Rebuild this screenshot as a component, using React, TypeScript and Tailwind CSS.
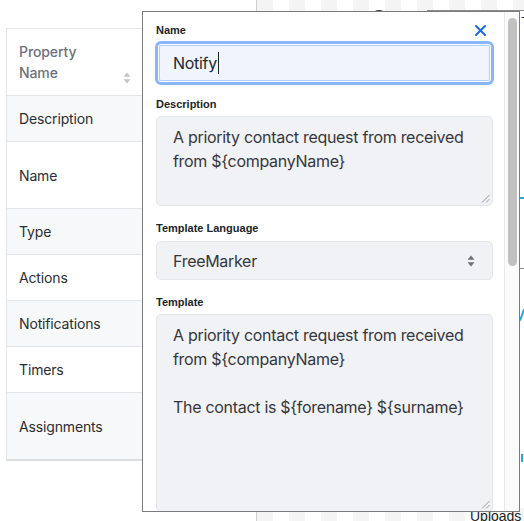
import React from 'react'

const rows = [
  { label: 'Description', h: 'h-[46px]', shade: true },
  { label: 'Name', h: 'h-[67px]', shade: false },
  { label: 'Type', h: 'h-[46px]', shade: true },
  { label: 'Actions', h: 'h-[46px]', shade: false },
  { label: 'Notifications', h: 'h-[46px]', shade: true },
  { label: 'Timers', h: 'h-[46px]', shade: false },
  { label: 'Assignments', h: 'h-[66px]', shade: true },
]

function SortIcon({ color = '#c3c6cc' }: { color?: string }) {
  return (
    <svg width="8" height="12" viewBox="0 0 8 12">
      <path d="M4 0.5 L7.5 4.8 H0.5 Z" fill={color} />
      <path d="M4 11.5 L7.5 7.2 H0.5 Z" fill={color} />
    </svg>
  )
}

function ResizeGrip() {
  return (
    <svg className="absolute right-[2px] bottom-[2px]" width="9" height="9" viewBox="0 0 9 9">
      <path d="M8.5 1 L1 8.5 M8.5 5 L5 8.5" stroke="#9a9a9a" strokeWidth="1" />
    </svg>
  )
}

function FieldLabel({ children }: { children: React.ReactNode }) {
  return (
    <div className="text-[11px] leading-[12px] font-bold text-[#212529] font-['Liberation_Sans',Arial,sans-serif]">
      {children}
    </div>
  )
}

export default function App() {
  return (
    <div className="relative w-[524px] h-[521px] overflow-hidden bg-white font-['Inter',sans-serif]">
      <div className="flex h-full">
        {/* properties table */}
        <div className="w-[256px] shrink-0 pl-[6px] pt-[28px]">
          <div className="w-[244px] border border-[#e3e5e8] border-b-2 border-b-[#dcdde0]">
            <div className="flex h-[67px] border-b border-[#e3e5e8]">
              <div className="w-[136px] flex items-center justify-between pl-[12px] pr-[12px] text-[14px] leading-[21px] font-medium text-[#6c6f7d] tracking-[-0.1px]">
                <div>
                  <div>Property</div>
                  <div>Name</div>
                </div>
                <div className="self-end mb-[11px]">
                  <SortIcon />
                </div>
              </div>
            </div>
            {rows.map((r, i) => (
              <div
                key={r.label}
                className={`flex items-center ${r.h} ${r.shade ? 'bg-[#f7f8f9]' : 'bg-white'} ${i < rows.length - 1 ? 'border-b border-[#e3e5e8]' : ''}`}
              >
                <div className="pl-[12px] text-[14px] text-[#2b2d33] tracking-[-0.15px]">{r.label}</div>
              </div>
            ))}
          </div>
        </div>

        {/* canvas */}
        <div className="relative flex-1 border-l border-[#cfcfcf] bg-[image:repeating-conic-gradient(#ffffff_0_25%,#f4f4f4_0_50%)] bg-[length:32px_32px] bg-[position:0_-4px]">
          <div className="absolute left-[114px] top-[10px] w-[16px] h-[16px] rounded-full bg-[#2a2a2a]" />
          <div className="absolute left-[170px] top-[10px] w-[120px] h-[258px] border-t border-l border-[#8a8a8a] bg-white">
            <div className="pl-[93px] pt-[2px] text-[12px] text-[#333]">T</div>
            <div className="absolute left-[92px] top-[186px] w-[20px] h-[2px] bg-[#2aa7d8]" />
          </div>
          <div className="absolute left-[170px] top-[268px] w-[120px] h-[240px] border-t border-l border-[#8a8a8a] bg-white">
            <div className="absolute left-[93px] top-[40px] w-[2px] h-[12px] bg-[#2aa7d8] rotate-[20deg]" />
            <div className="absolute left-[93px] top-[185px] w-[4px] h-[8px] border-l-2 border-[#2aa7d8]" />
          </div>
          <div className="absolute left-[213px] top-[508px] text-[14px] leading-[16px] text-[#222] font-['Liberation_Sans',Arial,sans-serif]">
            Uploads
          </div>
        </div>
      </div>

      {/* edit popup */}
      <div className="absolute left-[142px] top-[11px] w-[378px] h-[501px] border border-[#7c7c7c] bg-white flex">
        <div className="flex-1 overflow-hidden pl-[13px] pr-[11px] pt-[12px]">
          <div className="flex items-center justify-between">
            <FieldLabel>Name</FieldLabel>
            <svg className="mr-[7px]" width="11" height="11" viewBox="0 0 11 11">
              <path d="M1 1 L10 10 M10 1 L1 10" stroke="#1769f0" strokeWidth="2" strokeLinecap="round" />
            </svg>
          </div>
          <div className="mt-[5px] -ml-[1px] -mr-[1px] h-[44px] rounded-[6px] border-[3px] border-[#8ab6f7] shadow-[inset_0_0_0_1px_#ffffff,inset_0_0_0_2px_#b4cff6] bg-[#eff4fd] flex items-center pl-[15px] text-[16px] text-[#26282c] tracking-[-0.3px]">
            <span>Notify</span>
            <span className="ml-[1px] w-[1px] h-[22px] bg-[#222]" />
          </div>

          <div className="mt-[13px]">
            <FieldLabel>Description</FieldLabel>
          </div>
          <div className="relative mt-[6px] h-[90px] rounded-[5px] border border-[#e5e6ea] bg-[#f1f2f6] px-[16px] pt-[8px] text-[16px] leading-[24px] text-[#35373c] tracking-[-0.3px]">
            <div>A priority contact request from received</div>
            <div>from {'${companyName}'}</div>
            <ResizeGrip />
          </div>

          <div className="mt-[16px]">
            <FieldLabel>Template Language</FieldLabel>
          </div>
          <div className="mt-[7px] h-[39px] rounded-[5px] border border-[#e5e6ea] bg-[#f1f2f6] flex items-center justify-between pl-[16px] pr-[17px] text-[16px] text-[#35373c] tracking-[-0.3px]">
            <span>FreeMarker</span>
            <SortIcon color="#6f7179" />
          </div>

          <div className="mt-[16px]">
            <FieldLabel>Template</FieldLabel>
          </div>
          <div className="relative mt-[6px] h-[198px] rounded-[5px] border border-[#e5e6ea] bg-[#f1f2f6] px-[16px] pt-[8px] text-[16px] leading-[24px] text-[#35373c] tracking-[-0.3px]">
            <div>A priority contact request from received</div>
            <div>from {'${companyName}'}</div>
            <div className="h-[24px]" />
            <div>The contact is {'${forename} ${surname}'}</div>
            <ResizeGrip />
          </div>
        </div>

        {/* scrollbar */}
        <div className="w-[15px] shrink-0 border-l border-[#e8e8e8] bg-[#fbfbfb] pt-[6px]">
          <div className="ml-[3px] w-[9px] h-[248px] rounded-full bg-[#c1c1c1]" />
        </div>
      </div>
    </div>
  )
}
